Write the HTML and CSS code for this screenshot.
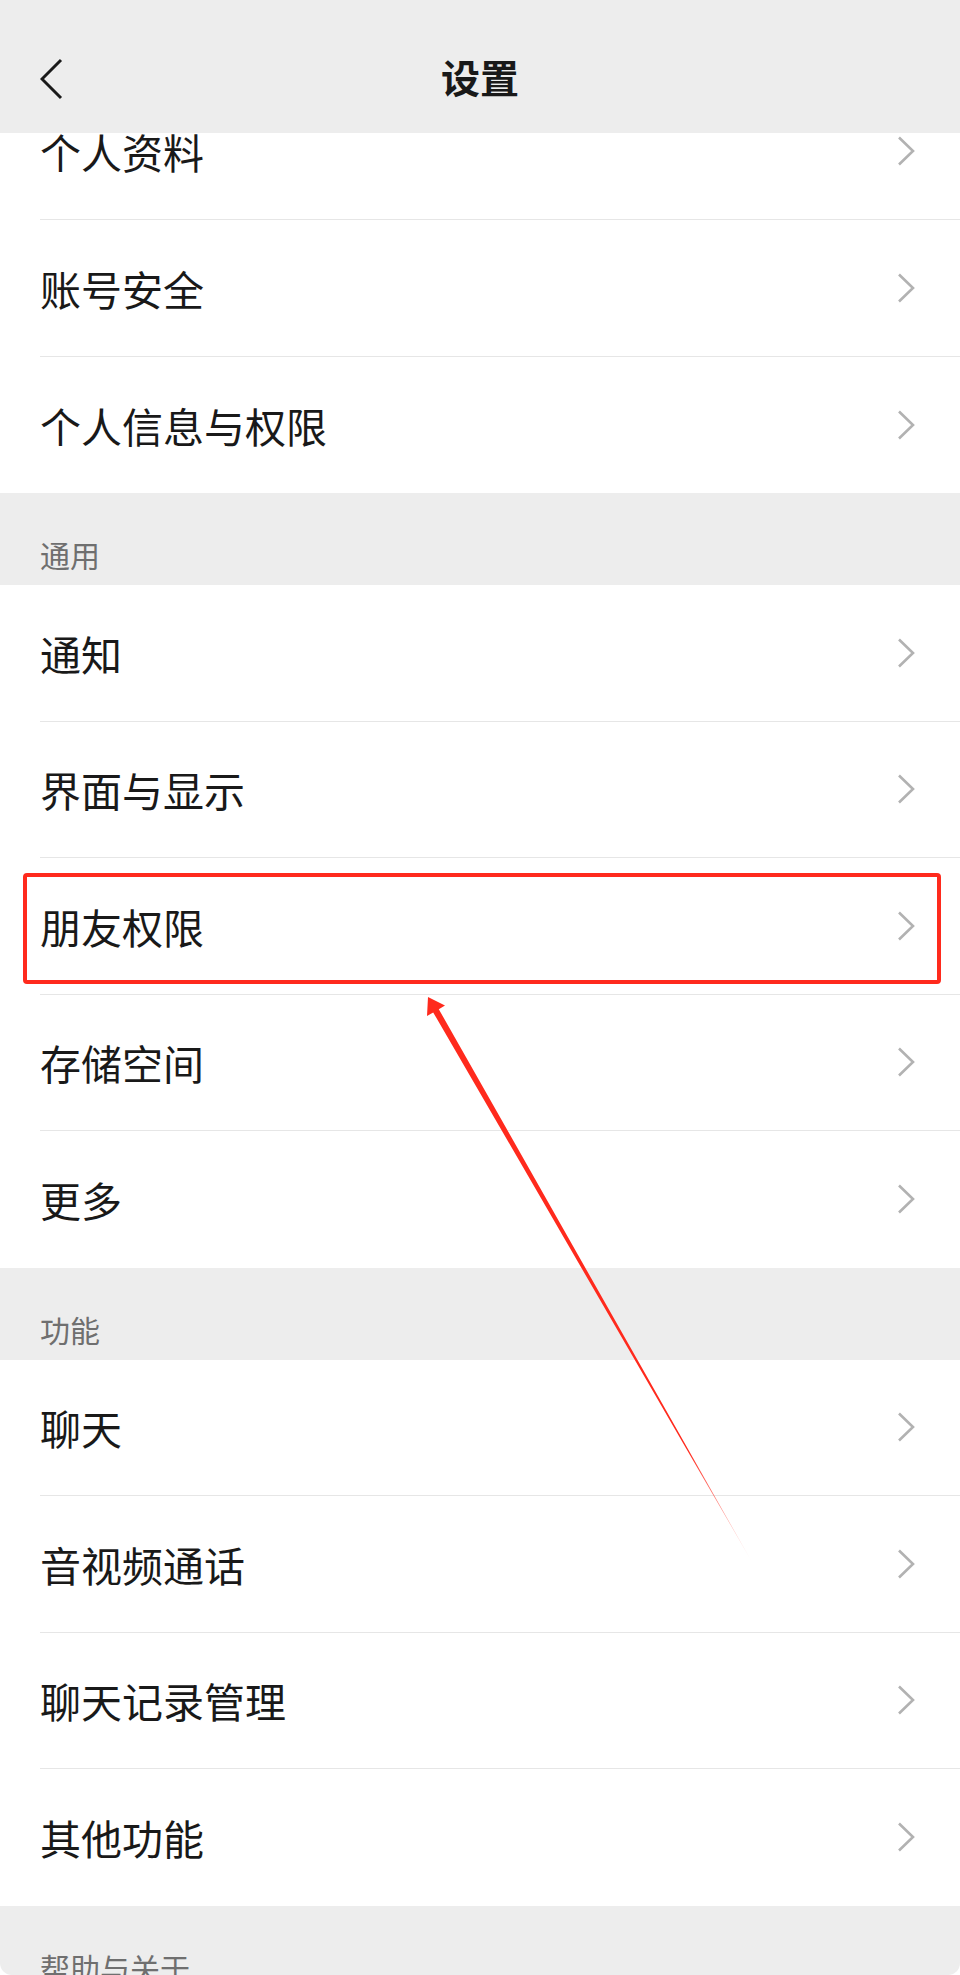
FILE: index.html
```html
<!DOCTYPE html>
<html>
	<head>
		<meta charset="utf-8">
		<title>设置</title>
		<link rel="stylesheet" href="styles.css">
	</head>
	<body>
	<div class="screen">
		<header class="topbar">
			<span class="back">
				<svg width="24" height="44" viewBox="0 0 24 44"><path d="M21 2 L2 21 L21 40" fill="none" stroke="#1a1a1a" stroke-width="3"/></svg>
			</span>
			<h1 class="title">设置</h1>
			<span></span>
		</header>
		<div class="scroll">
			<div class="list">
				<div class="group first">
					<div class="row"><div class="row-body"><span>个人资料</span><i class="arrow-r"></i></div></div>
					<div class="row"><div class="row-body"><span>账号安全</span><i class="arrow-r"></i></div></div>
					<div class="row"><div class="row-body"><span>个人信息与权限</span><i class="arrow-r"></i></div></div>
				</div>
				<div class="group-title">通用</div>
				<div class="group">
					<div class="row"><div class="row-body"><span>通知</span><i class="arrow-r"></i></div></div>
					<div class="row"><div class="row-body"><span>界面与显示</span><i class="arrow-r"></i></div></div>
					<div class="row marked"><div class="row-body"><span>朋友权限</span><i class="arrow-r"></i></div></div>
					<div class="row"><div class="row-body"><span>存储空间</span><i class="arrow-r"></i></div></div>
					<div class="row"><div class="row-body"><span>更多</span><i class="arrow-r"></i></div></div>
				</div>
				<div class="group-title">功能</div>
				<div class="group">
					<div class="row"><div class="row-body"><span>聊天</span><i class="arrow-r"></i></div></div>
					<div class="row"><div class="row-body"><span>音视频通话</span><i class="arrow-r"></i></div></div>
					<div class="row"><div class="row-body"><span>聊天记录管理</span><i class="arrow-r"></i></div></div>
					<div class="row"><div class="row-body"><span>其他功能</span><i class="arrow-r"></i></div></div>
				</div>
				<div class="group-title">帮助与关于</div>
			</div>
		</div>
		<!-- annotation arrow drawn over the list -->
		<svg class="pointer" width="960" height="1975" viewBox="0 0 960 1975">
			<defs>
				<linearGradient id="fade" gradientUnits="userSpaceOnUse" x1="428" y1="997" x2="752" y2="1562">
					<stop offset="0" stop-color="#ff2a1d"/>
					<stop offset="0.8" stop-color="#ff2a1d"/>
					<stop offset="1" stop-color="#ff2a1d" stop-opacity="0.05"/>
				</linearGradient>
			</defs>
			<polygon points="428,997 445,1005.5 438.8,1009.2 752,1562 433.2,1012.4 427,1016" fill="url(#fade)"/>
		</svg>
	</div>
	</body>
</html>
```

FILE: styles.css
```css
body {
	margin: 0;
	background: #fff;
	font-family: "Noto Sans CJK SC", "Noto Sans", sans-serif;
}
.screen {
	position: relative;
	width: 960px;
	height: 1975px;
	overflow: hidden;
	background: #fff;
	border-radius: 0 0 12px 12px;
}
.topbar {
	position: relative;
	z-index: 2;
	height: 133px;
	box-sizing: border-box;
	padding-top: 19px;
	background: #ededed;
	display: grid;
	grid-template-columns: 1fr auto 1fr;
	align-items: center;
}
.back {
	padding-left: 40px;
	margin-top: 8px;
	display: flex;
	align-items: center;
}
.title {
	margin: 0;
	font-size: 39px;
	font-weight: 600;
	color: #191919;
	line-height: 1;
}
.scroll {
	height: 1842px;
	overflow: hidden;
}
.list {
	margin-top: -50.5px;
}
.group {
	background: #fff;
}
.row {
	position: relative;
	padding-left: 40px;
}
.row-body {
	height: 136.5px;
	box-sizing: border-box;
	border-bottom: 1px solid #e6e6e6;
	padding-right: 45px;
	display: flex;
	align-items: center;
	justify-content: space-between;
	font-size: 41px;
	color: #191919;
}
.row:first-child .row-body {
	height: 137.5px;
}
.row:last-child .row-body {
	border-bottom: none;
}
.arrow-r {
	width: 18px;
	height: 30px;
	background: url("data:image/svg+xml;utf8,<svg xmlns='http://www.w3.org/2000/svg' width='18' height='30' viewBox='0 0 18 30'><path d='M2 1.5 L16 15 L2 28.5' fill='none' stroke='%23b2b2b2' stroke-width='2.6'/></svg>") no-repeat center;
}
.group:not(.first) .row:first-child .row-body {
	height: 136.5px;
}
.marked::before {
	content: "";
	position: absolute;
	top: 15px;
	bottom: 11px;
	left: 23px;
	right: 19px;
	border: 4px solid #ff2a1d;
	border-radius: 4px;
}
.group-title {
	height: 92px;
	box-sizing: border-box;
	background: #ededed;
	padding: 0 40px 16px;
	display: flex;
	align-items: flex-end;
	font-size: 30px;
	line-height: 30px;
	color: #6f6f6f;
}
.pointer {
	position: absolute;
	left: 0;
	top: 0;
	pointer-events: none;
}
```
